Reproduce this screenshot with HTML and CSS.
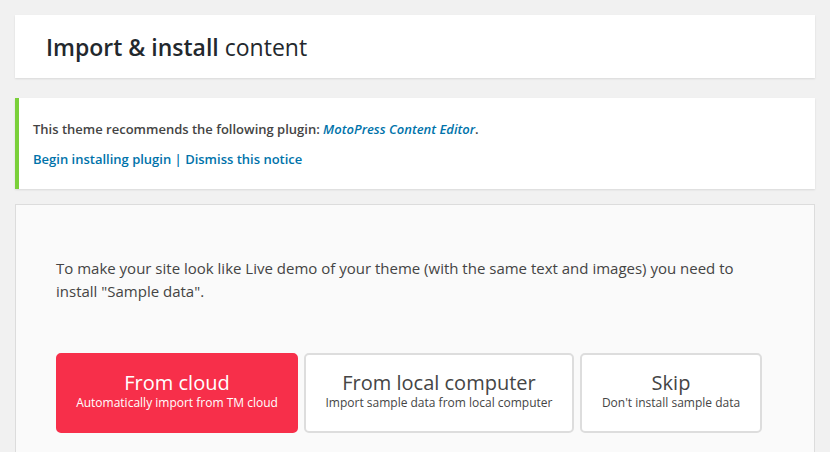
FILE: index.html
```html
<!DOCTYPE html>
<html>
<head>
<meta charset="utf-8">
<link rel="stylesheet" href="styles.css">
</head>
<body>
<div class="wrap">
  <div class="header-card">
    <h1 class="title"><strong>Import &amp; install</strong> content</h1>
  </div>
  <div class="notice">
    <p class="notice-line">This theme recommends the following plugin: <a class="plugin-link" href="#">MotoPress Content Editor</a>.</p>
    <p class="notice-links"><a href="#">Begin installing plugin</a> | <a href="#">Dismiss this notice</a></p>
  </div>
  <div class="main-box">
    <p class="intro">To make your site look like Live demo of your theme (with the same text and images) you need to install "Sample data".</p>
    <div class="buttons">
      <a class="btn btn-primary btn-cloud" href="#"><span class="btn-title">From cloud</span><span class="btn-sub">Automatically import from TM cloud</span></a>
      <a class="btn btn-local" href="#"><span class="btn-title">From local computer</span><span class="btn-sub">Import sample data from local computer</span></a>
      <a class="btn btn-skip" href="#"><span class="btn-title">Skip</span><span class="btn-sub">Don't install sample data</span></a>
    </div>
  </div>
</div>
</body>
</html>
```
FILE: styles.css
```css
html, body {
  margin: 0;
  padding: 0;
  background: #f1f1f1;
  font-family: "Open Sans", "Noto Sans", sans-serif;
  color: #444;
  height: 452px;
  overflow: hidden;
}
.wrap {
  padding: 15px 15px 0 15px;
  display: flex;
  flex-direction: column;
}
.header-card {
  background: #fff;
  height: 63px;
  box-shadow: 0 1px 2px rgba(0,0,0,0.1);
  display: flex;
  align-items: center;
  padding-left: 31px;
}
.title {
  margin: 0;
  font-size: 23px;
  font-weight: 400;
  color: #23282d;
  line-height: 1;
  position: relative;
  top: 1px;
}
.title strong {
  font-weight: 600;
}
.notice {
  margin-top: 20px;
  background: #fff;
  border-left: 4px solid #7ad03a;
  box-shadow: 0 1px 2px rgba(0,0,0,0.1);
  height: 91px;
  padding: 0 14px;
  box-sizing: border-box;
  font-size: 13px;
  font-weight: 600;
  padding-top: 21px;
}
.notice p {
  margin: 0;
  line-height: 20px;
}
.notice-line {
  color: #444;
}
.notice-links {
  margin-top: 10px !important;
  color: #0073aa;
}
.notice a {
  color: #0073aa;
  text-decoration: none;
}
.plugin-link {
  font-style: italic;
}
.main-box {
  margin-top: 15px;
  background: #fafafa;
  border: 1px solid #dcdcdc;
  border-bottom: none;
  height: 248px;
  box-sizing: border-box;
  padding: 52px 40px 0 40px;
}
.intro {
  margin: 0;
  font-size: 15px;
  line-height: 23px;
  color: #444;
  max-width: 720px;
}
.buttons {
  display: flex;
  gap: 6px;
  margin-top: 50px;
}
.btn {
  display: flex;
  flex-direction: column;
  align-items: center;
  justify-content: center;
  height: 80px;
  box-sizing: border-box;
  border-radius: 5px;
  text-decoration: none;
  border: 2px solid #dddddd;
  background: #fff;
  color: #454545;
  padding-bottom: 4px;
}
.btn-primary {
  background: #f72f4a;
  border-color: #f72f4a;
  color: #fff;
}
.btn-cloud { width: 242px; }
.btn-local { width: 270px; }
.btn-skip { width: 182px; }
.btn-title {
  font-size: 20px;
  line-height: 24px;
}
.btn-sub {
  font-size: 12px;
  line-height: 16px;
}
```
